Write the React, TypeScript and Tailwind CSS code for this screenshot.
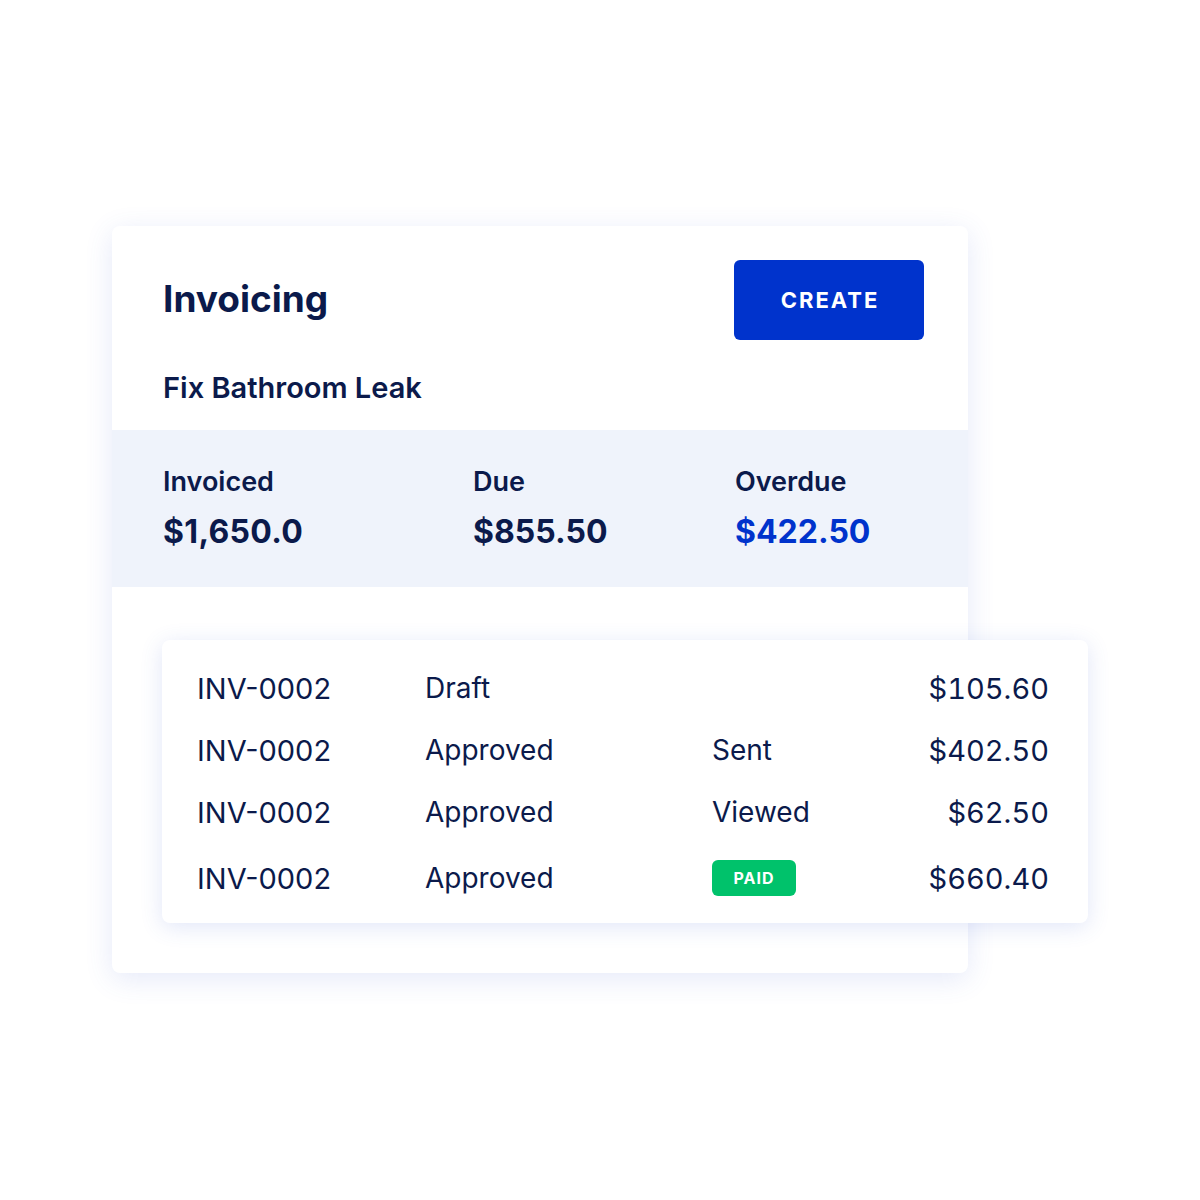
import React from "react";

const rows = [
  { id: "INV-0002", status: "Draft", state: "", amount: "$105.60" },
  { id: "INV-0002", status: "Approved", state: "Sent", amount: "$402.50" },
  { id: "INV-0002", status: "Approved", state: "Viewed", amount: "$62.50" },
  { id: "INV-0002", status: "Approved", state: "PAID", amount: "$660.40" },
];

export default function App() {
  return (
    <div className="min-h-[1200px] w-[1200px] bg-white pt-[226px] pl-[112px] font-['Inter',sans-serif] text-[#0b1a4b]">
      <div className="w-[856px] rounded-[8px] bg-white pb-[50px] shadow-[0_6px_28px_rgba(70,100,210,0.14)]">
        <div className="flex items-center justify-between pt-[34px] pl-[51px] pr-[44px]">
          <h1 className="mt-[-3px] text-[37px] font-bold leading-none">Invoicing</h1>
          <button className="flex h-[80px] w-[190px] items-center justify-center rounded-[6px] bg-[#0033cc] pl-[2px] text-[22px] font-bold tracking-[0.09em] text-white">
            CREATE
          </button>
        </div>
        <div className="pl-[51px] pt-[31px] pb-[25px] text-[29px] font-semibold leading-[34px]">
          Fix Bathroom Leak
        </div>
        <div className="flex h-[157px] bg-[#eff3fb] pl-[51px] pt-[36px]">
          <div className="w-[310px]">
            <div className="text-[27px] font-semibold leading-[32px]">Invoiced</div>
            <div className="mt-[14px] text-[32px] font-bold leading-[40px] tracking-[0.01em]">$1,650.0</div>
          </div>
          <div className="w-[262px]">
            <div className="text-[27px] font-semibold leading-[32px]">Due</div>
            <div className="mt-[14px] text-[32px] font-bold leading-[40px]">$855.50</div>
          </div>
          <div>
            <div className="text-[27px] font-semibold leading-[32px]">Overdue</div>
            <div className="mt-[14px] text-[32px] font-bold leading-[40px] text-[#0033cc]">$422.50</div>
          </div>
        </div>
        <div className="ml-[50px] mr-[-120px] mt-[53px] rounded-[8px] bg-white pt-[17px] pb-[10px] pl-[35px] pr-[39px] shadow-[0_4px_22px_rgba(70,100,210,0.16)]">
          {rows.map((r, i) => (
            <div
              key={i}
              className={`grid grid-cols-[228px_287px_1fr_auto] items-center text-[29px] leading-none ${i === 3 ? "h-[70px]" : "h-[62px]"}`}
            >
              <div>{r.id}</div>
              <div className="text-[28px]">{r.status}</div>
              <div className="text-[28px]">
                {r.state === "PAID" ? (
                  <span className="inline-flex h-[36px] w-[84px] items-center justify-center rounded-[6px] bg-[#00c26b] text-[16px] font-bold tracking-[0.06em] text-white">
                    PAID
                  </span>
                ) : (
                  r.state
                )}
              </div>
              <div className="text-right tabular-nums">{r.amount}</div>
            </div>
          ))}
        </div>
      </div>
    </div>
  );
}
